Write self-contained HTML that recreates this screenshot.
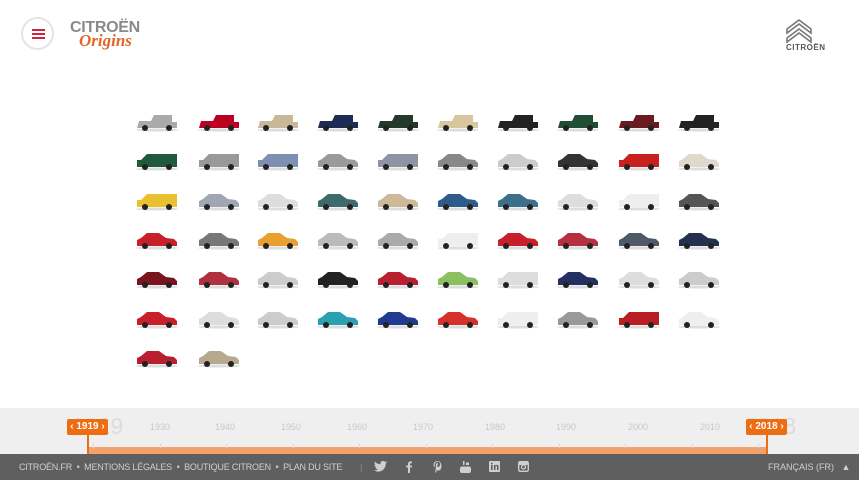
<!DOCTYPE html>
<html><head><meta charset="utf-8"><style>
*{margin:0;padding:0;box-sizing:border-box}
body{width:859px;height:480px;overflow:hidden;background:#fff;font-family:"Liberation Sans",sans-serif;position:relative}
.burger{position:absolute;left:21px;top:17px;width:33px;height:33px;border-radius:50%;border:2px solid #e4e4e4;background:#fff}
.burger i{position:absolute;left:9px;width:13px;height:2px;background:#d0233e}
.logo1{position:absolute;left:70px;top:19px;font-size:16px;font-weight:bold;color:#8a8a8a;letter-spacing:-0.3px}
.logo2{position:absolute;left:79px;top:31px;font-size:17px;font-style:italic;font-weight:bold;color:#e3652a;font-family:"Liberation Serif",serif}
.clogo{position:absolute;left:784px;top:16px}
.clogo span{position:absolute;left:2px;top:27px;font-size:8px;font-weight:bold;color:#555;letter-spacing:0.5px}
#cars{position:absolute;left:0;top:0}
.tl{position:absolute;left:0;top:408px;width:859px;height:46px;background:#efefef}
.yr{position:absolute;top:14px;font-size:9px;color:#c8c8c8}
.bar{position:absolute;left:88px;top:39px;width:680px;height:7px;background:#f2a36d}
.tick{position:absolute;top:35px;width:1px;height:5px;background:#ddd}
.badge{position:absolute;top:11px;height:16px;width:41px;background:#ee6d13;border-radius:2px;color:#fff;font-size:10px;font-weight:bold;text-align:center;line-height:16px}
.stem{position:absolute;top:27px;width:2px;height:19px;background:#ee6d13}
.ghost{position:absolute;top:5px;font-size:23px;color:#dcdcdc}
.foot{position:absolute;left:0;top:454px;width:859px;height:26px;background:#5f5f5f;color:#cfcfcf;font-size:9px;line-height:26px}
.foot span{position:absolute;white-space:nowrap}
.foot svg{position:absolute;top:7px}
</style></head><body>
<div class="burger"><i style="top:10px"></i><i style="top:14px"></i><i style="top:18px"></i></div>
<div class="logo1">CITROËN</div>
<div class="logo2">Origins</div>
<div class="clogo"><svg width="30" height="28" viewBox="0 0 30 28"><path d="M3 13 L15 4 L27 13 L27 17 L15 8 L3 17Z" fill="none" stroke="#777" stroke-width="1.6"/><path d="M3 22 L15 13 L27 22 L27 26 L15 17 L3 26Z" fill="none" stroke="#777" stroke-width="1.6"/></svg><span>CITROËN</span></div>
<svg id="cars" width="859" height="400"></svg>
<div class="tl">
<div class="ghost" style="left:72px">1919</div>
<div class="ghost" style="left:745px">2018</div>
<div class="yr" style="left:150px">1930</div><div class="yr" style="left:215px">1940</div><div class="yr" style="left:281px">1950</div><div class="yr" style="left:347px">1960</div><div class="yr" style="left:413px">1970</div><div class="yr" style="left:485px">1980</div><div class="yr" style="left:556px">1990</div><div class="yr" style="left:628px">2000</div><div class="yr" style="left:700px">2010</div>
<div class="bar"></div>
<div class="badge" style="left:67px">‹ 1919 ›</div><div class="stem" style="left:87px"></div>
<div class="badge" style="left:746px">‹ 2018 ›</div><div class="stem" style="left:766px"></div>
</div>
<div class="foot">
<span style="left:19px;letter-spacing:-0.2px">CITROËN.FR &nbsp;•&nbsp; MENTIONS LÉGALES &nbsp;•&nbsp; BOUTIQUE CITROEN &nbsp;•&nbsp; PLAN DU SITE</span>
<span style="left:360px;color:#888">|</span>
<svg style="left:374px" width="13" height="11" viewBox="0 0 13 11"><path d="M13 1.3c-.5.2-1 .4-1.5.4.6-.3 1-.9 1.2-1.5-.5.3-1.1.5-1.7.7C10.500.3 9.800 0 9 0 7.500 0 6.300 1.200 6.300 2.700c0 .2 0 .4.1.6C4.200 3.200 2.200 2.100.9.500.7.900.5 1.400.5 1.900c0 .9.5 1.800 1.200 2.200-.4 0-.9-.1-1.200-.3 0 1.300.9 2.400 2.100 2.600-.4.1-.8.1-1.200 0 .3 1.100 1.300 1.900 2.500 1.900-1 .7-2.100 1.100-3.400 1.100H0c1.200.8 2.600 1.200 4.100 1.200 4.900 0 7.600-4.100 7.600-7.600v-.3c.5-.4 1-.9 1.300-1.400z" fill="#cfcfcf"/></svg>
<svg style="left:406px" width="6" height="12" viewBox="0 0 6 12"><path d="M4 12V6.5h1.7L6 4.500H4V3.300c0-.6.2-1 1-1h1V.5C5.800.5 5.200.4 4.500.4 3 .4 2 1.300 2 3v1.500H.3v2H2V12z" fill="#cfcfcf"/></svg>
<svg style="left:433px" width="9" height="12" viewBox="0 0 9 12"><path d="M4.500 0C2 0 .5 1.700.5 3.600c0 1 .5 2 1.300 2.300.2 0 .3 0 .3-.2l.1-.6c0-.1 0-.2-.1-.3-.3-.3-.4-.7-.4-1.200 0-1.600 1.200-2.800 2.900-2.800 1.600 0 2.400.9 2.400 2.200 0 1.700-.7 3-1.800 3-.6 0-1-.5-.9-1.100.2-.7.5-1.500.5-2 0-.5-.2-.9-.8-.9-.6 0-1.100.6-1.100 1.500 0 .5.2.9.2.9L2.400 10c-.2 1 0 2 0 2h.2s.6-.8.8-1.500l.4-1.600c.2.400.8.700 1.400.700 1.900 0 3.200-1.700 3.200-4C8.400 1.700 6.800 0 4.500 0z" fill="#cfcfcf"/></svg>
<svg style="left:460px" width="11" height="12" viewBox="0 0 11 12"><rect x="3" y="0" width="1.5" height="4" fill="#cfcfcf"/><rect x="6" y="1.5" width="3" height="2.5" fill="#cfcfcf"/><rect x="0" y="5.5" width="11" height="6.5" rx="2" fill="#cfcfcf"/></svg>
<svg style="left:489px" width="11" height="11" viewBox="0 0 11 11"><rect width="11" height="11" rx="1" fill="#cfcfcf"/><rect x="2" y="4" width="1.6" height="5" fill="#5f5f5f"/><rect x="2" y="1.8" width="1.6" height="1.5" fill="#5f5f5f"/><path d="M5 4h1.5v.8c.3-.5.9-.9 1.600-.9 1.100 0 1.400.7 1.400 1.800V9H8V6c0-.6-.1-1-.7-1-.6 0-.8.4-.8 1v3H5z" fill="#5f5f5f"/></svg>
<svg style="left:518px" width="11" height="11" viewBox="0 0 11 11"><rect x=".7" y=".7" width="9.6" height="9.6" rx="1.5" fill="none" stroke="#cfcfcf" stroke-width="1.4"/><rect x="1" y="1" width="9" height="3" fill="#cfcfcf"/><circle cx="5.5" cy="6" r="2" fill="none" stroke="#cfcfcf" stroke-width="1.3"/></svg>
<span style="left:768px">FRANÇAIS (FR) &nbsp;&nbsp;▲</span>
</div>
<script>
var rows=[
[["o","#aaa"],["o","#b02"],["o","#c9b79a"],["o","#1d2b55"],["o","#233a2a"],["o","#d8c79e"],["o","#222"],["o","#1f4e35"],["o","#6a1b20"],["o","#222"]],
[["v","#1f5a3a"],["v","#999"],["v","#7e8fb0"],["s","#9a9a9a"],["v","#8c94a6"],["s","#888"],["s","#ccc"],["s","#333"],["v","#c8201e"],["s","#e0d8cc"]],
[["v","#e8c030"],["s","#9fa6b4"],["s","#ddd"],["s","#3d6b6b"],["s","#cdb89a"],["s","#2f5b8c"],["s","#3b6f8a"],["s","#ddd"],["v","#eee"],["s","#555"]],
[["s","#c8202a"],["s","#777"],["s","#e8a030"],["s","#bbb"],["s","#aaa"],["v","#eee"],["s","#c8202a"],["s","#b83040"],["s","#4e5b66"],["s","#243050"]],
[["s","#7a1520"],["s","#b03040"],["s","#ccc"],["s","#222"],["s","#b82030"],["s","#8bc060"],["v","#ddd"],["s","#243060"],["s","#ddd"],["s","#ccc"]],
[["s","#c8202a"],["s","#ddd"],["s","#ccc"],["s","#2aa0b0"],["s","#203a90"],["s","#d8302a"],["v","#eee"],["s","#999"],["v","#b81f25"],["s","#eee"]],
[["s","#b82030"],["s","#b8a890"]]];
var xs=[157,219,278,338,398,458,518,578,639,699],ys=[123,162,202,241,280,320,359];
var h="";
rows.forEach(function(r,i){r.forEach(function(c,j){var x=xs[j]-21,y=ys[i];var col=c[1];
var body;
if(c[0]=="o")body='<path d="M1 '+(y+5)+' h40 v-6 h-5 v-7 h-18 l-3 6 h-12 z" fill="'+col+'"/>';
else if(c[0]=="v")body='<path d="M1 '+(y+5)+' h40 v-13 h-30 l-6 6 h-4 z" fill="'+col+'"/>';
else body='<path d="M1 '+(y+5)+' h40 v-4 l-3 -3 l-8 -1 l-7 -5 h-12 l-6 5 l-4 2 z" fill="'+col+'"/>';
h+='<g transform="translate('+x+',0)"><ellipse cx="21" cy="'+(y+7)+'" rx="21" ry="1.5" fill="#ddd"/>'+body+'<circle cx="9" cy="'+(y+5)+'" r="3" fill="#222"/><circle cx="33" cy="'+(y+5)+'" r="3" fill="#222"/></g>';});});
document.getElementById("cars").innerHTML=h;
var tl=document.querySelector(".tl");for(var k=0;k<11;k++){var t=document.createElement("div");t.className="tick";t.style.left=(93+k*66.5)+"px";tl.appendChild(t);}
</script>
</body></html>
